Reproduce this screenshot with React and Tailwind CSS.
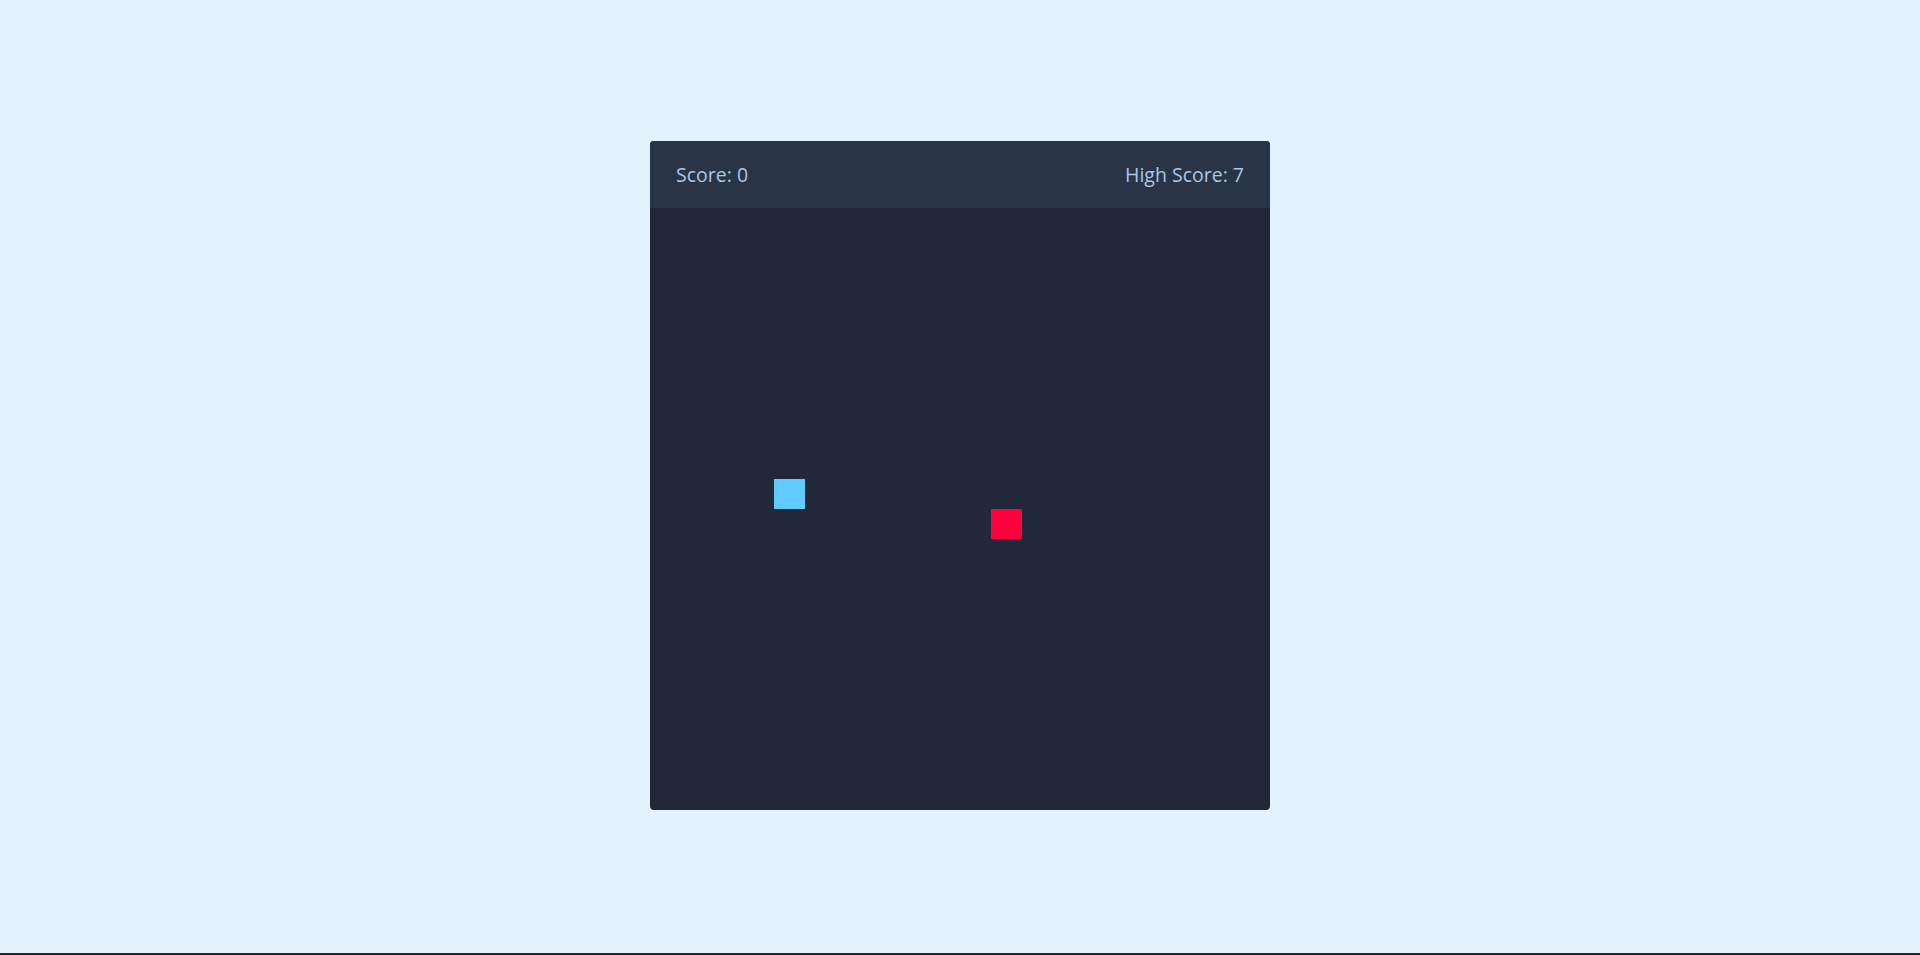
import { useState } from 'react';

const Cell = ({ x, y, className }) => (
  <div
    className={className}
    style={{ gridColumn: x + 1, gridRow: y + 1 }}
  />
);

const App = () => {
  const [snake] = useState([{ x: 4, y: 9 }]);
  const [food] = useState({ x: 11, y: 10 });
  const [score] = useState(0);
  const [highScore] = useState(7);

  return (
    <div className="flex h-screen flex-col bg-[#e3f2fd] font-['Open_Sans','Noto_Sans',sans-serif]">
      <main className="flex flex-1 items-start justify-center pt-[141px]">
        <div className="w-[620px] overflow-hidden rounded bg-[#212838]">
          <header className="flex h-[67px] items-center justify-between bg-[#293447] px-[26px] text-[19.5px] text-[#a9c7e6]">
            <span>Score: {score}</span>
            <span>High Score: {highScore}</span>
          </header>
          <div className="h-[602px] pt-px">
            <div className="grid grid-cols-[repeat(20,31px)] grid-rows-[repeat(20,30px)]">
              {snake.map((part, i) => (
                <Cell key={i} x={part.x} y={part.y} className="bg-[#61caff]" />
              ))}
              <Cell x={food.x} y={food.y} className="bg-[#ff003c]" />
            </div>
          </div>
        </div>
      </main>
      <div className="h-[2px] bg-[#262626]" />
    </div>
  );
};

export default App;
